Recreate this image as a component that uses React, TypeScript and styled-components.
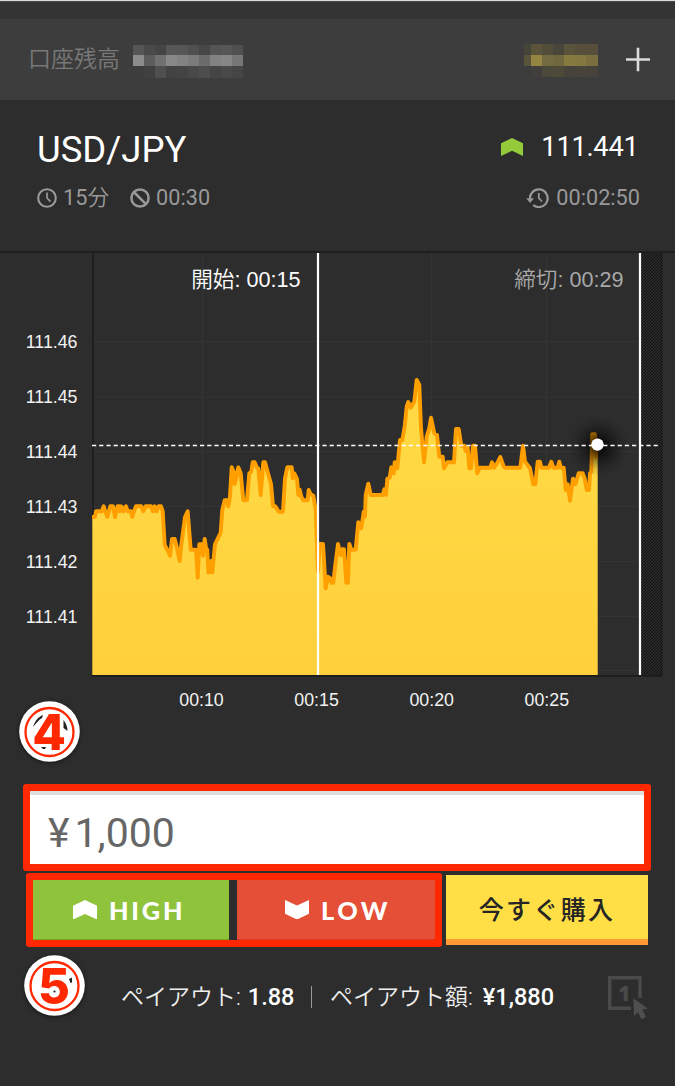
import React from "react";
import styled, { createGlobalStyle } from "styled-components";

const GlobalStyle = createGlobalStyle`
  *, *::before, *::after { box-sizing: border-box; }
  body {
    margin: 0;
    background: #2d2d2d;
    font-family: Roboto, "Noto Sans CJK JP", sans-serif;
    color: #fff;
  }
`;

const Screen = styled.main`
  position: relative;
  width: 675px;
  height: 1086px;
  overflow: hidden;
  display: flex;
  flex-direction: column;
  background: #2d2d2d;
`;

const StatusStrip = styled.div`
  flex: none;
  height: 19px;
  background: #343434;
  border-top: 1px solid #d9dcdb;
  box-shadow: inset 0 1px 0 #4a4a4a;
`;

const AccountBar = styled.header`
  flex: none;
  height: 81px;
  display: flex;
  align-items: center;
  padding: 0 24px 0 28px;
  background: #3d3d3d;
`;

const AccountLabel = styled.span`
  width: 105px;
  font-size: 23px;
  line-height: 30px;
  font-weight: 350;
  color: #787878;
  white-space: nowrap;
`;

const Mosaic = styled.div<{ $columns: string; $rows: string; $drop: number }>`
  display: grid;
  margin-top: ${(p) => p.$drop}px;
  grid-template-columns: ${(p) => p.$columns};
  grid-template-rows: ${(p) => p.$rows};
`;

const Pixel = styled.i<{ $tone: string }>`
  background: ${(p) => p.$tone};
`;

const Spacer = styled.div`
  flex: 1;
`;

const AddButton = styled.button`
  margin-left: 28px;
  padding: 0;
  border: 0;
  background: none;
  line-height: 0;
`;

const Quote = styled.section`
  flex: none;
  height: 153px;
  padding: 27px 35px 0 37px;
  border-bottom: 2px solid #1f1f1f;
`;

const QuoteRow = styled.div<{ $height: number }>`
  height: ${(p) => p.$height}px;
  display: flex;
  align-items: center;
  justify-content: space-between;
`;

const Pair = styled.h1`
  margin: 0;
  padding-top: 1px;
  font-size: 36.5px;
  line-height: 44px;
  font-weight: 400;
`;

const Price = styled.div`
  display: flex;
  align-items: center;
  gap: 18px;
  margin-right: 1.5px;
  padding-bottom: 4px;
  font-size: 27.3px;
  line-height: 36px;
  letter-spacing: -0.3px;
`;

const Meta = styled.div`
  display: flex;
  align-items: center;
  font-size: 21.7px;
  line-height: 30px;
  font-weight: 400;
  color: #999;
  gap: 21px;
`;

const MetaItem = styled.span<{ $gap: number }>`
  display: flex;
  align-items: center;
  gap: ${(p) => p.$gap}px;
`;

const Minutes = styled.span`
  font-weight: 350;
  b { font-weight: 400; }
`;

const ChartSvg = styled.svg`
  flex: none;
  display: block;
  font-family: "Liberation Sans", "Noto Sans CJK JP", sans-serif;
`;

const Order = styled.section`
  flex: none;
  padding: 63px 24px 0 23px;
`;

const AmountField = styled.div`
  height: 87px;
  display: flex;
  align-items: center;
  padding: 11px 0 0 18px;
  border: 7px solid #ff2800;
  border-radius: 3px;
  background: linear-gradient(#dedede 4px, #fff 4px);
  background-origin: padding-box;
  color: #666;
  font-size: 41px;
  line-height: 48px;
  gap: 5px;
`;

const Actions = styled.div`
  margin: 2px 3px 0 3px;
  display: flex;
  gap: 4px;
  align-items: flex-start;
`;

const Directions = styled.div`
  width: 416px;
  height: 74px;
  display: flex;
  gap: 8px;
  border: 7px solid #ff2800;
  border-radius: 3px;
  background: #2d2d2d;
`;

const DirectionButton = styled.button<{ $fill: string; $edge: string; $width: number; $inset: number; $tracking: number }>`
  width: ${(p) => p.$width}px;
  height: 60px;
  display: flex;
  align-items: center;
  justify-content: flex-start;
  gap: 12px;
  padding: 0 0 0 ${(p) => p.$inset}px;
  border: 0;
  border-bottom: 1px solid ${(p) => p.$edge};
  background: ${(p) => p.$fill};
  color: #fff;
  font: 900 25.3px/30px Lato, sans-serif;
  letter-spacing: ${(p) => p.$tracking}px;
`;

const BuyButton = styled.button`
  width: 202px;
  height: 70px;
  margin-top: 2px;
  padding: 1px 0 0 0;
  border: 0;
  border-bottom: 6px solid #ff9a35;
  background: #ffdf45;
  color: #252525;
  font: 500 25px/36px "Noto Sans CJK JP", sans-serif;
  letter-spacing: 2.3px;
`;

const PayoutRow = styled.div`
  display: flex;
  margin: 29px 2px 0 98px;
  height: 46px;
  font-size: 23px;
  line-height: 42px;
  font-weight: 350;
  color: #eee;
  white-space: nowrap;
`;

const PayoutItem = styled.span<{ $width: number; $gap: number }>`
  width: ${(p) => p.$width}px;
  b {
    margin-left: ${(p) => p.$gap}px;
    font-size: 23.5px;
    font-weight: 500;
    color: #fff;
  }
`;

const Divider = styled.span`
  width: 1px;
  height: 22px;
  margin: 10px 18px 0 16px;
  background: #999;
`;

const StepBadge = styled.div<{ $x: number; $y: number }>`
  position: absolute;
  left: ${(p) => p.$x}px;
  top: ${(p) => p.$y}px;
  width: 61px;
  height: 61px;
  filter: drop-shadow(0 1px 2px rgba(0, 0, 0, 0.5));
  svg { display: block; }
`;

const balanceTones = [
  "#565656 #4a4a4a #454545 #575757 #565656 #505050 #474747 #545454 #575757 #505050",
  "#8c8c8c #5c5c5c #707070 #888888 #828282 #7b7b7b #6c6c6c #828282 #868686 #777777",
  "#3d3d3d #404040 #4f4f4f #424242 #444444 #494949 #4d4d4d #454545 #494949 #454545",
].join(" ").split(" ");

const profitTones = [
  "#45453a #5b533a #524e3a #48463a #5a533c #574f3b #574e3c",
  "#59533a #958442 #736b40 #6f673d #877a3f #837840 #7c6f3f",
  "#3c3c3b #403f3b #4a493a #4d4a3a #47433c #49443b #47433c",
].join(" ").split(" ");

/* Price ticks as x,y in chart pixels multiplied by three, in three segments. */
type Segment = { x: number; y: number; ticks: string };

const segments: Segment[] = [
  {
    x: 80,
    y: 430,
    ticks:
      "38,261 45,261 48,244 65,244 71,229 76,244 82,261 91,229 99,229 105,261 113,229 118,229 120,244 124,229 130,244 138,229 143,244 152,244 157,261 162,244 168,229 184,229 190,244 197,229 213,229 219,244 224,229 230,244 236,229 243,229 248,244 254,345 262,360 270,377 276,327 284,327 290,350 299,393 304,345 315,261 323,244 332,359 348,359 353,443 358,343 366,343 369,377 374,327 379,359 382,359 385,427 391,427 393,393 397,427 405,343 422,308 427,240 434,211 441,211 445,229 450,200 455,112 461,125 464,162 469,145 475,112 482,130 490,211 501,211 508,130 514,125 518,97 524,97 530,112 535,115 542,195 550,97 555,97 564,130 573,162 579,229 586,229 596,245 609,245 615,145 622,112 635,112 638,145 643,130 651,147 655,195 659,179 664,200 670,211 683,211 686,180 692,193 700,197 707,240",
  },
  {
    x: 310,
    y: 360,
    ticks:
      "24,635 29,552 39,552 47,685 53,650 61,655 64,668 70,668 76,615 84,552 92,585 96,568 102,568 109,668 114,668 118,552 124,569 137,569 145,487 154,505 161,455 165,470 167,405 175,371 182,405 218,405 223,388 228,405 232,356 239,353 244,322 251,340 254,307 262,325 270,240 277,240 284,200 290,140 295,126 302,143 313,125 320,60 328,75 333,205 342,307 350,230 358,205 363,173 373,220 381,225 388,290 398,290 402,325 412,307 432,307 438,207 446,207 454,257 463,257 467,273 473,262 478,325 483,325 489,257 495,257 502,340 509,323 541,323 546,307 552,323 563,307 571,291 581,320",
  },
  {
    x: 480,
    y: 400,
    ticks:
      "75,203 121,203 129,137 135,185 150,205 160,253 166,253 173,185 180,185 184,203 207,203 214,185 220,203 233,203 238,185 242,203 251,203 257,270 263,253 270,302 279,236 286,253 296,220 308,220 314,236 320,270 327,270 330,220 334,215 337,103 345,103 349,172",
  },
];

const CHART_TOP = 252;

const line = segments
  .flatMap((s) =>
    s.ticks.split(" ").map((t) => {
      const [x, y] = t.split(",").map(Number);
      return `${(s.x + x / 3).toFixed(1)},${(s.y + y / 3 - CHART_TOP).toFixed(1)}`;
    })
  )
  .join(" L");

const priceLabels = ["111.46", "111.45", "111.44", "111.43", "111.42", "111.41"];
const timeLabels = ["00:10", "00:15", "00:20", "00:25"];

function Chart() {
  return (
    <ChartSvg width={675} height={468} viewBox="0 1 675 468">
      <defs>
        <linearGradient id="area" x1="0" y1="0" x2="0" y2="1">
          <stop offset="0" stopColor="#ffdb45" />
          <stop offset="1" stopColor="#ffd03c" />
        </linearGradient>
        <radialGradient id="glow">
          <stop offset="0.15" stopColor="#000" stopOpacity="0.75" />
          <stop offset="0.45" stopColor="#000" stopOpacity="0.4" />
          <stop offset="0.75" stopColor="#000" stopOpacity="0.12" />
          <stop offset="1" stopColor="#000" stopOpacity="0" />
        </radialGradient>
        <pattern id="hatch" width="3" height="3" patternUnits="userSpaceOnUse">
          <rect width="3" height="3" fill="#343434" />
          <path d="M-1 1L1 -1M0 3L3 0M2 4L4 2" stroke="#0e0e0e" strokeWidth="1.1" />
        </pattern>
        <clipPath id="plot">
          <rect x="92" y="0" width="506" height="423" />
        </clipPath>
      </defs>

      <g stroke="#343434" strokeWidth="1">
        {[89.5, 145, 199.5, 254.5, 309.5, 364.5, 418.5].map((y) => (
          <path key={y} d={`M93 ${y}H640`} />
        ))}
        {[202.5, 431.5, 546.5].map((x) => (
          <path key={x} d={`M${x} 0V423`} />
        ))}
      </g>
      <path d="M93 0V424" stroke="#1e1e1e" strokeWidth="1.7" />
      <rect x="641" y="0" width="21" height="424" fill="url(#hatch)" />
      <path d="M662 0V424" stroke="#1b1b1b" />
      <path d="M92 423.8H662.5" stroke="#1b1b1b" strokeWidth="1.7" />

      <g clipPath="url(#plot)">
        <path d={`M${line} L597.7,193 V423 H92.3 V265 Z`} fill="url(#area)" />
        <path
          d={`M${line}`}
          fill="none"
          stroke="#ffa000"
          strokeWidth="3.9"
          strokeLinejoin="round"
          strokeLinecap="round"
        />
      </g>

      <circle cx="598.5" cy="194" r="31" fill="url(#glow)" />
      <path d="M318 0V423M640 0V423" stroke="#fff" strokeWidth="2.2" />
      <path d="M92 193.4H660" stroke="#fff" strokeWidth="1.5" strokeDasharray="4.2 3" />
      <circle cx="597.5" cy="192.6" r="6.2" fill="#fff" />

      <g fontSize="21.6" textAnchor="end" fontWeight="350">
        <text x="300.5" y="34.5" fill="#fff">開始: 00:15</text>
        <text x="623.5" y="34.5" fill="#a8a8a8">締切: 00:29</text>
      </g>
      <g fontSize="17.8" fill="#f2f2f2">
        {priceLabels.map((label, i) => (
          <text key={label} x="77.5" y={96.2 + i * 54.95} textAnchor="end">{label}</text>
        ))}
        {timeLabels.map((label, i) => (
          <text key={label} x={201.5 + i * 115.1} y="454.3" textAnchor="middle">{label}</text>
        ))}
      </g>
    </ChartSvg>
  );
}

const ClockIcon = () => (
  <svg width="20" height="20" viewBox="0 0 20 20" fill="none" stroke="#999" strokeWidth="2.1">
    <circle cx="10" cy="10" r="8.8" />
    <path d="M10 4.6V10L13.5 13.6" strokeWidth="1.7" />
  </svg>
);

const BlockedIcon = () => (
  <svg width="20" height="20" viewBox="0 0 20 20" fill="none" stroke="#999" strokeWidth="2.5">
    <circle cx="10" cy="10" r="8.6" />
    <path d="M3.8 4L16 16.2" />
  </svg>
);

const HistoryIcon = () => (
  <svg width="23" height="20" viewBox="0 0 23 20" fill="none" stroke="#999" strokeWidth="2.2">
    <path d="M4.2 12A8.8 8.8 0 1 1 7.2 17" />
    <path d="M0.3 10.3H8L4.1 14.9Z" fill="#999" stroke="none" />
    <path d="M12.8 5V10.2L16 13.5" strokeWidth="1.7" />
  </svg>
);

const Arrow = ({ down = false, fill = "#fff", width = 24 }) => (
  <svg width={width} height={(width * 19.5) / 24} viewBox="0 0 24 19.5">
    <path
      fill={fill}
      d={down ? "M0 0L12 5.5L24 0V13.8L12 19.5L0 13.8Z" : "M0 5.8L12 0L24 5.8V19.5L12 14L0 19.5Z"}
    />
  </svg>
);

const OneClickIcon = () => (
  <svg width="42" height="44" viewBox="0 0 42 44">
    <path d="M24 32.3H2.7V1.7H33V22" fill="none" stroke="#4a4a4a" strokeWidth="3.4" />
    <path d="M26.5 22.5L40.8 32.6L35.2 33.8L39 41L34.4 43.2L31 36L27 40Z" fill="#4f4f4f" />
    <text x="17.2" y="24.8" textAnchor="middle" fill="#4a4a4a" fontSize="20.5" fontWeight="800" fontFamily="Open Sans, sans-serif">1</text>
  </svg>
);

function Step({ digit, x, y, children }: { digit: string; x: number; y: number; children: React.ReactNode }) {
  return (
    <StepBadge $x={x} $y={y}>
      <svg width="61" height="61" viewBox="0 0 61 61">
        <circle cx="30.5" cy="30.5" r="30.3" fill="#fff" />
        <circle cx="30.5" cy="31" r="24" fill="none" stroke="#ff2800" strokeWidth="2.3" />
        {children}
        <text x="30" y="49" textAnchor="middle" fill="#ff2800" fontFamily="Inter, sans-serif" fontWeight="800" fontSize="49">
          {digit}
        </text>
      </svg>
    </StepBadge>
  );
}

export default function App() {
  return (
    <Screen>
      <GlobalStyle />
      <StatusStrip />
      <AccountBar>
        <AccountLabel>口座残高</AccountLabel>
        <Mosaic $columns="repeat(10, 11px)" $rows="10px 11px 12px" $drop={4}>
          {balanceTones.map((tone, i) => <Pixel key={i} $tone={tone} />)}
        </Mosaic>
        <Spacer />
        <Mosaic $columns="7px repeat(5, 11px) 12px" $rows="11px 11px 11px" $drop={2}>
          {profitTones.map((tone, i) => <Pixel key={i} $tone={tone} />)}
        </Mosaic>
        <AddButton>
          <svg width="25" height="25" viewBox="0 0 25 25">
            <path d="M0 12.5H24M12 0.7V24.3" stroke="#dcdcdc" strokeWidth="2.6" />
          </svg>
        </AddButton>
      </AccountBar>

      <Quote>
        <QuoteRow $height={44}>
          <Pair>USD/JPY</Pair>
          <Price>
            <Arrow fill="#94cb3a" width={22} />
            <span>111.441</span>
          </Price>
        </QuoteRow>
        <QuoteRow $height={54}>
          <Meta>
            <MetaItem $gap={6}>
              <ClockIcon />
              <Minutes><b>15</b>分</Minutes>
            </MetaItem>
            <MetaItem $gap={6}>
              <BlockedIcon />
              <span>00:30</span>
            </MetaItem>
          </Meta>
          <Meta>
            <MetaItem $gap={7}>
              <HistoryIcon />
              <span>00:02:50</span>
            </MetaItem>
          </Meta>
        </QuoteRow>
      </Quote>

      <Chart />

      <Order>
        <AmountField>
          <span>¥</span>
          <span>1,000</span>
        </AmountField>
        <Actions>
          <Directions>
            <DirectionButton $width={196} $inset={40} $tracking={2.8} $fill="#90c33c" $edge="#78a51f">
              <Arrow />
              <span>HIGH</span>
            </DirectionButton>
            <DirectionButton $width={198} $inset={48} $tracking={3.5} $fill="#e54f37" $edge="#d83a22">
              <Arrow down />
              <span>LOW</span>
            </DirectionButton>
          </Directions>
          <BuyButton>今すぐ購入</BuyButton>
        </Actions>
        <PayoutRow>
          <PayoutItem $width={174} $gap={7}>ペイアウト:<b>1.88</b></PayoutItem>
          <Divider />
          <PayoutItem $width={224} $gap={10}>ペイアウト額:<b>¥1,880</b></PayoutItem>
          <Spacer />
          <OneClickIcon />
        </PayoutRow>
      </Order>

      <Step digit="4" x={18.5} y={701}>
        <path d="M14 26C16 20 19 16 24 14L23 17C19 19 17 23 14 26Z" fill="#222" />
        <path d="M44.5 19C47 22 48.5 26 48.5 30L44.5 27Z" fill="#222" />
        <path d="M22 46H27L26 48H24Z" fill="#222" />
      </Step>
      <Step digit="5" x={23.5} y={955}>
        <path d="M45 24L48 22.5V27.5L46.5 28Z" fill="#222" />
        <circle cx="30.5" cy="36.5" r="1.1" fill="#222" />
      </Step>
    </Screen>
  );
}
